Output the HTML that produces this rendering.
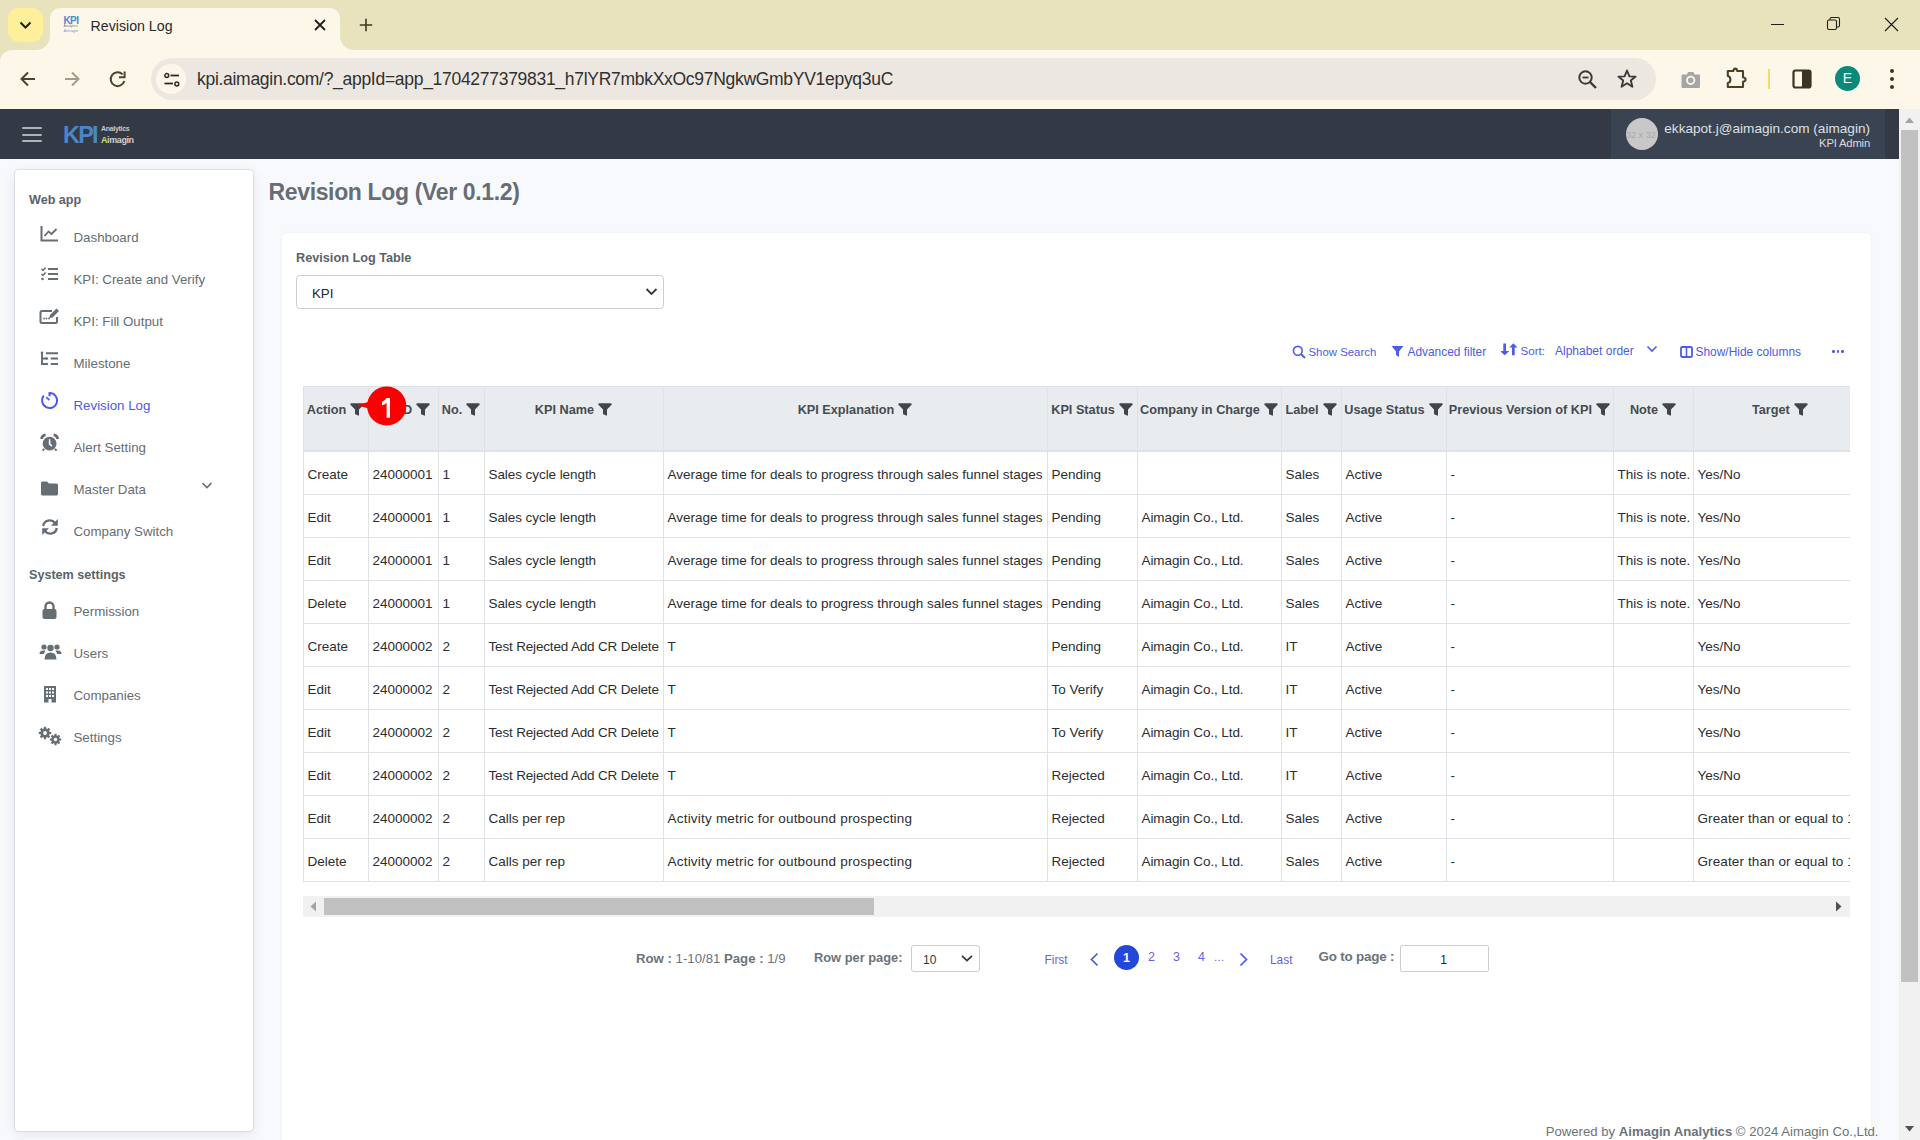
<!DOCTYPE html>
<html><head><meta charset="utf-8"><title>Revision Log</title>
<style>
*{box-sizing:border-box;margin:0;padding:0}
html,body{width:1920px;height:1140px;overflow:hidden;background:#f8f9fd;font-family:"Liberation Sans",sans-serif}
.a{position:absolute}
.nw{white-space:nowrap}
.t{line-height:1}
</style></head><body>
<div class="a" style="left:0px;top:0px;width:1920px;height:50px;background:#e9e3bd;"></div>
<div class="a" style="left:0px;top:50px;width:1920px;height:59px;background:#fdf7ea;"></div>
<div class="a" style="left:50px;top:8px;width:290px;height:50px;background:#fdf7ea;border-radius:10px 10px 0 0"></div>
<div class="a" style="left:36px;top:36px;width:14px;height:14px;background:#fdf7ea;"></div>
<div class="a" style="left:22px;top:22px;width:28px;height:28px;background:#e9e3bd;border-radius:0 0 14px 0"></div>
<div class="a" style="left:340px;top:36px;width:14px;height:14px;background:#fdf7ea;"></div>
<div class="a" style="left:340px;top:22px;width:28px;height:28px;background:#e9e3bd;border-radius:0 0 0 14px"></div>
<div class="a" style="left:0px;top:50px;width:12px;height:12px;background:#e9e3bd;"></div>
<div class="a" style="left:0px;top:50px;width:24px;height:24px;background:#fdf7ea;border-radius:12px 0 0 0"></div>
<div class="a" style="left:8px;top:8px;width:35px;height:34px;background:#fef09a;border-radius:11px"></div>
<svg class="a" style="left:17px;top:17px;" width="17" height="17" viewBox="0 0 17 17"><path d="M3.5 5.5 L8.5 10.5 L13.5 5.5" fill="none" stroke="#1f1f1f" stroke-width="2"/></svg>
<div class="a nw t" style="top:15.54px;font-size:10px;color:#4a8ad0;font-weight:bold;left:63.5px;letter-spacing:-0.6px">KPI</div>
<div class="a nw t" style="top:24.95px;font-size:3.6px;color:#777;left:63.5px;">Analytics</div>
<div class="a nw t" style="top:28.61px;font-size:4px;color:#6aa0e0;left:63.5px;">Aimagin</div>
<div class="a nw t" style="top:18.68px;font-size:14.2px;color:#2a2a2a;left:90.5px;">Revision Log</div>
<svg class="a" style="left:313px;top:18px;" width="14" height="14" viewBox="0 0 14 14"><path d="M2 2 L12 12 M12 2 L2 12" stroke="#1f1f1f" stroke-width="1.8"/></svg>
<svg class="a" style="left:358px;top:17px;" width="16" height="16" viewBox="0 0 16 16"><path d="M8 1.8 V14.2 M1.8 8 H14.2" stroke="#3d3820" stroke-width="1.6"/></svg>
<div class="a" style="left:1771px;top:24px;width:13px;height:1px;background:#1f1f1f;"></div>
<svg class="a" style="left:1826px;top:16px;" width="15" height="15" viewBox="0 0 15 15"><rect x="1.5" y="4" width="9" height="9.5" rx="1.5" fill="none" stroke="#1f1f1f" stroke-width="1.1"/><path d="M4 4 V3 Q4 1.5 5.5 1.5 H12 Q13.5 1.5 13.5 3 V9.5 Q13.5 11 12 11 H10.5" fill="none" stroke="#1f1f1f" stroke-width="1.1"/></svg>
<svg class="a" style="left:1884px;top:17px;" width="15" height="15" viewBox="0 0 15 15"><path d="M1 1 L14 14 M14 1 L1 14" stroke="#1f1f1f" stroke-width="1.2"/></svg>
<svg class="a" style="left:18px;top:69px;" width="20" height="20" viewBox="0 0 20 20"><path d="M17 10 H4 M10 3.5 L3.5 10 L10 16.5" fill="none" stroke="#4a4530" stroke-width="2"/></svg>
<svg class="a" style="left:62px;top:69px;" width="20" height="20" viewBox="0 0 20 20"><path d="M3 10 H16 M10 3.5 L16.5 10 L10 16.5" fill="none" stroke="#a19d8c" stroke-width="2"/></svg>
<svg class="a" style="left:107px;top:69px;" width="20" height="20" viewBox="0 0 20 20"><path d="M15.6 5.4 A6.9 6.9 0 1 0 17.3 12" fill="none" stroke="#4a4530" stroke-width="2"/><path d="M17.6 2.4 V8.3 H11.9" fill="none" stroke="#4a4530" stroke-width="2"/></svg>
<div class="a" style="left:151px;top:58px;width:1505px;height:42px;background:#ece8e1;border-radius:21px"></div>
<div class="a" style="left:156px;top:64px;width:30px;height:30px;border-radius:50%;background:#fdf7ea"></div>
<svg class="a" style="left:163px;top:70.5px;" width="18" height="18" viewBox="0 0 18 18"><circle cx="3.8" cy="4.5" r="1.9" fill="none" stroke="#2d2d2d" stroke-width="1.5"/><path d="M7.5 4.5 H16" stroke="#2d2d2d" stroke-width="1.8"/><circle cx="13.8" cy="13" r="1.9" fill="none" stroke="#2d2d2d" stroke-width="1.5"/><path d="M1.5 12.5 H10" stroke="#2d2d2d" stroke-width="1.8"/></svg>
<div class="a nw t" style="top:70.99px;font-size:17.5px;color:#303030;left:197px;letter-spacing:-0.29px">kpi.aimagin.com/?_appId=app_1704277379831_h7lYR7mbkXxOc97NgkwGmbYV1epyq3uC</div>
<svg class="a" style="left:1577px;top:69px;" width="22" height="22" viewBox="0 0 22 22"><circle cx="8.5" cy="8.5" r="6.2" fill="none" stroke="#3a3a3a" stroke-width="2"/><path d="M5.5 8.5 H11.5" stroke="#3a3a3a" stroke-width="1.8"/><path d="M13 13 L19 19" stroke="#3a3a3a" stroke-width="2.4"/></svg>
<svg class="a" style="left:1616px;top:68px;" width="22" height="22" viewBox="0 0 22 22"><path d="M11 2.5 L13.4 8.4 L19.6 8.6 L14.8 12.6 L16.4 18.8 L11 15.3 L5.6 18.8 L7.2 12.6 L2.4 8.6 L8.6 8.4 Z" fill="none" stroke="#3a3a3a" stroke-width="1.9" stroke-linejoin="round"/></svg>
<svg class="a" style="left:1680px;top:70px;" width="22" height="20" viewBox="0 0 22 20"><path d="M2.5 4.5 H7 L8 2 H13.5 L14.5 4.5 H19 Q20 4.5 20 5.5 V17 Q20 18 19 18 H2.5 Q1.5 18 1.5 17 V5.5 Q1.5 4.5 2.5 4.5Z" fill="#a6a6a6"/><circle cx="10.7" cy="10.3" r="4.6" fill="#fdf7ea"/><circle cx="10.7" cy="10.3" r="2.8" fill="#a6a6a6"/></svg>
<svg class="a" style="left:1724px;top:66px;" width="26" height="26" viewBox="0 0 26 26"><path d="M3.8 5 H9.3 Q9.8 2.6 11.3 2.6 Q12.8 2.6 13.3 5 H19 V11.3 Q21.6 11.8 21.6 13.5 Q21.6 15.2 19 15.7 V21 H3.8 V17 Q6.4 16.6 6.4 13.5 Q6.4 10.4 3.8 10 Z" fill="none" stroke="#4a4328" stroke-width="2.1" stroke-linejoin="round"/></svg>
<div class="a" style="left:1768px;top:69px;width:2px;height:20px;background:#f0dc6e;"></div>
<svg class="a" style="left:1792px;top:69px;" width="20" height="20" viewBox="0 0 20 20"><rect x="1.5" y="1.5" width="17" height="17" rx="2" fill="none" stroke="#3a3520" stroke-width="2.2"/><rect x="10" y="1.5" width="8.5" height="17" fill="#3a3520"/></svg>
<div class="a" style="left:1835px;top:66px;width:25px;height:25px;border-radius:50%;background:#0b8a78;color:#fff;font-size:14px;text-align:center;line-height:25px">E</div>
<div class="a" style="left:1890px;top:69px;width:4px;height:4px;border-radius:50%;background:#3a3520;box-shadow:0 8px 0 #3a3520,0 16px 0 #3a3520"></div>
<div class="a" style="left:0px;top:109px;width:1899px;height:50px;background:#333a46;"></div>
<div class="a" style="left:1611px;top:109px;width:274px;height:50px;background:#3a4352;"></div>
<div class="a" style="left:22px;top:127px;width:20px;height:2px;background:#aeb2b9;border-radius:1px"></div>
<div class="a" style="left:22px;top:133.5px;width:20px;height:2px;background:#aeb2b9;border-radius:1px"></div>
<div class="a" style="left:22px;top:140px;width:20px;height:2px;background:#aeb2b9;border-radius:1px"></div>
<div class="a nw t" style="top:123.61px;font-size:23.5px;color:#4a86c8;font-weight:bold;left:63px;letter-spacing:-1.8px">KPI</div>
<div class="a nw t" style="top:125.07px;font-size:7px;color:#c8c8c8;font-weight:bold;left:101px;letter-spacing:-0.3px">Analytics</div>
<div class="a nw t" style="top:136.38px;font-size:9px;color:#d0d0d0;font-weight:bold;left:101px;letter-spacing:-0.4px"><span style="color:#c6e06a">A</span>imagin</div>
<div class="a" style="left:1626px;top:118px;width:32px;height:32px;border-radius:50%;background:#c8c8c8"></div>
<div class="a nw t" style="top:130.63px;font-size:9.3px;color:#a9a9a9;left:1626px;letter-spacing:-0.1px">32 x 32</div>
<div class="a nw t" style="top:122.19px;font-size:13.6px;color:#dde0e4;right:50px;">ekkapot.j@aimagin.com (aimagin)</div>
<div class="a nw t" style="top:137.93px;font-size:11.3px;color:#d8dbe0;right:50px;letter-spacing:-0.2px">KPI Admin</div>
<div class="a" style="left:1899px;top:109px;width:21px;height:1031px;background:#f1f1f1;"></div>
<svg class="a" style="left:1904px;top:116px;" width="11" height="8" viewBox="0 0 11 8"><path d="M1 7 L5.5 1.5 L10 7 Z" fill="#a3a3a3"/></svg>
<div class="a" style="left:1901px;top:130px;width:17px;height:852px;background:#c1c1c1;"></div>
<svg class="a" style="left:1904px;top:1125px;" width="11" height="8" viewBox="0 0 11 8"><path d="M1 1 L5.5 6.5 L10 1 Z" fill="#505050"/></svg>
<div class="a" style="left:15px;top:169.5px;width:238px;height:961px;background:#fff;border-radius:4px;box-shadow:0 0 0 0.8px rgba(190,196,208,.55),0 3px 12px rgba(40,50,90,.10)"></div>
<div class="a nw t" style="top:194.23px;font-size:12.6px;color:#5b636b;font-weight:bold;left:29px;">Web app</div>
<div class="a nw t" style="top:230.74px;font-size:13.3px;color:#656d75;left:73.5px;">Dashboard</div>
<div class="a nw t" style="top:272.74px;font-size:13.3px;color:#656d75;left:73.5px;">KPI: Create and Verify</div>
<div class="a nw t" style="top:314.74px;font-size:13.3px;color:#656d75;left:73.5px;">KPI: Fill Output</div>
<div class="a nw t" style="top:356.74px;font-size:13.3px;color:#656d75;left:73.5px;">Milestone</div>
<div class="a nw t" style="top:398.74px;font-size:13.3px;color:#4b5ae4;left:73.5px;">Revision Log</div>
<div class="a nw t" style="top:440.74px;font-size:13.3px;color:#656d75;left:73.5px;">Alert Setting</div>
<div class="a nw t" style="top:482.74px;font-size:13.3px;color:#656d75;left:73.5px;">Master Data</div>
<div class="a nw t" style="top:524.74px;font-size:13.3px;color:#656d75;left:73.5px;">Company Switch</div>
<div class="a nw t" style="top:568.83px;font-size:12.6px;color:#5b636b;font-weight:bold;left:29px;">System settings</div>
<div class="a nw t" style="top:604.64px;font-size:13.3px;color:#656d75;left:73.5px;">Permission</div>
<div class="a nw t" style="top:646.94px;font-size:13.3px;color:#656d75;left:73.5px;">Users</div>
<div class="a nw t" style="top:688.94px;font-size:13.3px;color:#656d75;left:73.5px;">Companies</div>
<div class="a nw t" style="top:730.84px;font-size:13.3px;color:#656d75;left:73.5px;">Settings</div>
<svg class="a" style="left:40px;top:225px;" width="20" height="18" viewBox="0 0 20 18"><path d="M1.5 1 V15.5 H18" fill="none" stroke="#656d75" stroke-width="2"/><path d="M4.5 11 L8.5 6.5 L11.5 9 L16.5 4" fill="none" stroke="#656d75" stroke-width="1.8" stroke-linejoin="round"/></svg>
<svg class="a" style="left:40px;top:266px;" width="20" height="16" viewBox="0 0 20 16"><path d="M1.5 3 L3 4.5 L5.5 1.5 M1.5 8 L3 9.5 L5.5 6.5" fill="none" stroke="#656d75" stroke-width="1.5"/><circle cx="2.5" cy="13" r="1.3" fill="#656d75"/><path d="M8 3 H18 M8 8 H18 M8 13 H18" stroke="#656d75" stroke-width="2"/></svg>
<svg class="a" style="left:39px;top:307px;" width="21" height="18" viewBox="0 0 21 18"><path d="M13 4 H3 Q1.5 4 1.5 5.5 V14.5 Q1.5 16 3 16 H16.5 Q18 16 18 14.5 V10" fill="none" stroke="#656d75" stroke-width="2"/><path d="M10 11 L11 8 L17.5 1.5 L20 4 L13.5 10.5 Z" fill="#656d75"/><circle cx="5" cy="11.5" r="0.9" fill="#656d75"/><circle cx="7.5" cy="11.5" r="0.9" fill="#656d75"/><circle cx="10" cy="11.5" r="0.9" fill="#656d75"/></svg>
<svg class="a" style="left:40px;top:350px;" width="20" height="17" viewBox="0 0 20 17"><path d="M2 2.6 V14 H7 M2 8.5 H7" fill="none" stroke="#656d75" stroke-width="1.9"/><circle cx="2" cy="2.8" r="1.3" fill="#656d75"/><circle cx="6.8" cy="8.5" r="1.3" fill="#656d75"/><circle cx="6.8" cy="14" r="1.3" fill="#656d75"/><path d="M6 3.2 H18 M10.8 8.5 H18 M10.8 14 H18" stroke="#656d75" stroke-width="1.9"/></svg>
<svg class="a" style="left:40px;top:391px;" width="20" height="20" viewBox="0 0 20 20"><path d="M9.6 2 A7.5 7.5 0 1 1 3.85 4.68" fill="none" stroke="#4b5ae4" stroke-width="1.9"/><path d="M9.6 1.1 V5.2" stroke="#4b5ae4" stroke-width="2.2"/><path d="M6.3 6.2 L9.4 9.2" stroke="#4b5ae4" stroke-width="1.7"/></svg>
<svg class="a" style="left:40px;top:433px;" width="20" height="20" viewBox="0 0 20 20"><circle cx="9.6" cy="10.7" r="6.9" fill="#656d75"/><path d="M1.6 6 Q1.8 2.2 5.6 1.8 M17.6 6 Q17.4 2.2 13.6 1.8" fill="none" stroke="#656d75" stroke-width="2.8"/><path d="M4.2 15.8 L2.6 17.6 M15 15.8 L16.6 17.6" stroke="#656d75" stroke-width="1.9"/><path d="M9.6 6.3 V11 L11.9 13.2" fill="none" stroke="#fff" stroke-width="1.6"/></svg>
<svg class="a" style="left:40px;top:480px;" width="19" height="16" viewBox="0 0 19 16"><path d="M1 3 Q1 1.5 2.5 1.5 H7 L9 3.5 H16.5 Q18 3.5 18 5 V14 Q18 15.5 16.5 15.5 H2.5 Q1 15.5 1 14 Z" fill="#656d75"/></svg>
<svg class="a" style="left:201px;top:481px;" width="12" height="9" viewBox="0 0 12 9"><path d="M1.5 2 L6 6.5 L10.5 2" fill="none" stroke="#656d75" stroke-width="1.6"/></svg>
<svg class="a" style="left:41px;top:518px;" width="18" height="18" viewBox="0 0 18 18"><path d="M2.2 8 A6.6 6.6 0 0 1 14 5" fill="none" stroke="#656d75" stroke-width="2.3"/><path d="M15.8 10 A6.6 6.6 0 0 1 4 13" fill="none" stroke="#656d75" stroke-width="2.3"/><path d="M16.8 1 V7.8 H10 Z M1.2 17 V10.2 H8 Z" fill="#656d75"/></svg>
<svg class="a" style="left:41px;top:601px;" width="17" height="18" viewBox="0 0 17 18"><path d="M4.5 8 V5.5 A4 4 0 0 1 12.5 5.5 V8" fill="none" stroke="#656d75" stroke-width="2.4"/><rect x="1.5" y="8" width="14" height="10" rx="2" fill="#656d75"/></svg>
<svg class="a" style="left:39px;top:643px;" width="23" height="17" viewBox="0 0 23 17"><circle cx="5" cy="4" r="2.6" fill="#656d75"/><circle cx="18" cy="4" r="2.6" fill="#656d75"/><circle cx="11.5" cy="5" r="3.2" fill="#656d75"/><path d="M0.5 11 Q0.5 7.5 4 7.5 H6.5 Q5 9.5 5 11 Z M22.5 11 Q22.5 7.5 19 7.5 H16.5 Q18 9.5 18 11 Z" fill="#656d75"/><path d="M5.5 16.5 Q5.5 9.5 11.5 9.5 Q17.5 9.5 17.5 16.5 Z" fill="#656d75"/></svg>
<svg class="a" style="left:43px;top:685px;" width="14" height="18" viewBox="0 0 14 18"><path d="M1 1 H13 V17.5 H8.5 V14 H5.5 V17.5 H1 Z" fill="#656d75"/><g fill="#fff"><rect x="3" y="3" width="2" height="2"/><rect x="6" y="3" width="2" height="2"/><rect x="9" y="3" width="2" height="2"/><rect x="3" y="6.5" width="2" height="2"/><rect x="6" y="6.5" width="2" height="2"/><rect x="9" y="6.5" width="2" height="2"/><rect x="3" y="10" width="2" height="2"/><rect x="6" y="10" width="2" height="2"/><rect x="9" y="10" width="2" height="2"/></g></svg>
<svg class="a" style="left:38px;top:726px;" width="25" height="21" viewBox="0 0 25 21"><path d="M11.43 5.77 L13.21 5.92 L13.21 8.08 L11.43 8.23 L11.00 9.27 L12.15 10.62 L10.62 12.15 L9.27 11.00 L8.23 11.43 L8.08 13.21 L5.92 13.21 L5.77 11.43 L4.73 11.00 L3.38 12.15 L1.85 10.62 L3.00 9.27 L2.57 8.23 L0.79 8.08 L0.79 5.92 L2.57 5.77 L3.00 4.73 L1.85 3.38 L3.38 1.85 L4.73 3.00 L5.77 2.57 L5.92 0.79 L8.08 0.79 L8.23 2.57 L9.27 3.00 L10.62 1.85 L12.15 3.38 L11.00 4.73 Z" fill="#656d75"/><circle cx="7" cy="7" r="1.90" fill="#fff"/><path d="M21.55 12.38 L23.21 12.50 L23.21 14.50 L21.55 14.62 L21.15 15.57 L22.25 16.84 L20.84 18.25 L19.57 17.15 L18.62 17.55 L18.50 19.21 L16.50 19.21 L16.38 17.55 L15.43 17.15 L14.16 18.25 L12.75 16.84 L13.85 15.57 L13.45 14.62 L11.79 14.50 L11.79 12.50 L13.45 12.38 L13.85 11.43 L12.75 10.16 L14.16 8.75 L15.43 9.85 L16.38 9.45 L16.50 7.79 L18.50 7.79 L18.62 9.45 L19.57 9.85 L20.84 8.75 L22.25 10.16 L21.15 11.43 Z" fill="#656d75"/><circle cx="17.5" cy="13.5" r="1.70" fill="#fff"/></svg>
<div class="a nw t" style="top:181.03px;font-size:23px;color:#666d75;font-weight:bold;left:268.5px;letter-spacing:-0.35px">Revision Log (Ver 0.1.2)</div>
<div class="a" style="left:282px;top:233px;width:1589px;height:920px;background:#fff;border-radius:5px;box-shadow:0 0 3px rgba(30,40,80,.06)"></div>
<div class="a nw t" style="top:252.25px;font-size:12.7px;color:#5b636b;font-weight:bold;left:296px;">Revision Log Table</div>
<div class="a" style="left:296px;top:275px;width:368px;height:34px;background:#fff;border:1px solid #c9cfd5;border-radius:4px"></div>
<div class="a nw t" style="top:286.74px;font-size:13.3px;color:#212529;left:312px;">KPI</div>
<svg class="a" style="left:645px;top:287px;" width="13" height="10" viewBox="0 0 13 10"><path d="M1.5 2 L6.5 7 L11.5 2" fill="none" stroke="#343a40" stroke-width="1.8"/></svg>
<svg class="a" style="left:1292px;top:345px;" width="14" height="14" viewBox="0 0 14 14"><circle cx="5.8" cy="5.8" r="4.4" fill="none" stroke="#4d5be6" stroke-width="1.6"/><path d="M9 9 L13 13" stroke="#4d5be6" stroke-width="1.8"/></svg>
<div class="a nw t" style="top:347.35px;font-size:11.4px;color:#4d5be6;left:1308.5px;">Show Search</div>
<svg class="a" style="left:1391px;top:345px;" width="13" height="13" viewBox="0 0 13 13"><path d="M0.5 1 H12.5 L8 6.5 V12 L5 10 V6.5 Z" fill="#4d5be6"/></svg>
<div class="a nw t" style="top:346.93px;font-size:11.9px;color:#4d5be6;left:1407.5px;">Advanced filter</div>
<svg class="a" style="left:1501px;top:342px;" width="17" height="15" viewBox="0 0 17 15"><path d="M2.3 1.5 H5 V9 H8.4 L3.65 13.3 L0.9 10.8 L-1 9 H2.3 Z" fill="#4d5be6"/><path d="M11 13.2 H13.7 V5.5 H16.5 L12.35 1.3 L8.2 5.5 H11 Z" fill="#4d5be6"/></svg>
<div class="a nw t" style="top:344.68px;font-size:11.6px;color:#4d5be6;left:1520.5px;">Sort:</div>
<div class="a nw t" style="top:345.34px;font-size:12px;color:#4d5be6;left:1555px;">Alphabet order</div>
<svg class="a" style="left:1646px;top:345px;" width="12" height="8" viewBox="0 0 12 8"><path d="M1.5 1.5 L6 6 L10.5 1.5" fill="none" stroke="#4d5be6" stroke-width="1.6"/></svg>
<svg class="a" style="left:1680px;top:346px;" width="13" height="12" viewBox="0 0 13 12"><rect x="1" y="1" width="11" height="10" rx="1.2" fill="none" stroke="#4d5be6" stroke-width="1.8"/><path d="M6.5 1 V11" stroke="#4d5be6" stroke-width="1.6"/></svg>
<div class="a nw t" style="top:346.88px;font-size:11.95px;color:#4d5be6;left:1695.5px;">Show/Hide columns</div>
<div class="a" style="left:1832px;top:350px;width:2.6px;height:2.6px;border-radius:50%;background:#4d5be6"></div>
<div class="a" style="left:1836.5px;top:350px;width:2.6px;height:2.6px;border-radius:50%;background:#4d5be6"></div>
<div class="a" style="left:1841px;top:350px;width:2.6px;height:2.6px;border-radius:50%;background:#4d5be6"></div>
<div class="a" style="left:303px;top:386px;width:1547px;height:65px;background:#e9ecef;"></div>
<div class="a nw t" style="top:403.85px;font-size:12.7px;color:#454b52;font-weight:bold;left:306.75px;">Action</div>
<svg class="a" style="left:350.25px;top:402.5px;" width="14" height="13" viewBox="0 0 14 13"><path d="M0.3 1.2 Q0.3 0.3 1.3 0.3 H12.7 Q13.7 0.3 13.7 1.2 Q13.7 1.6 13.3 2 L9 6.5 V12 Q9 12.8 8.2 12.6 L5.8 11.6 Q5 11.3 5 10.5 V6.5 L0.7 2 Q0.3 1.6 0.3 1.2 Z" fill="#3f454b"/></svg>
<div class="a nw t" style="top:403.85px;font-size:12.7px;color:#454b52;font-weight:bold;left:399.5px;">ID</div>
<svg class="a" style="left:416.2px;top:402.5px;" width="14" height="13" viewBox="0 0 14 13"><path d="M0.3 1.2 Q0.3 0.3 1.3 0.3 H12.7 Q13.7 0.3 13.7 1.2 Q13.7 1.6 13.3 2 L9 6.5 V12 Q9 12.8 8.2 12.6 L5.8 11.6 Q5 11.3 5 10.5 V6.5 L0.7 2 Q0.3 1.6 0.3 1.2 Z" fill="#3f454b"/></svg>
<div class="a nw t" style="top:403.85px;font-size:12.7px;color:#454b52;font-weight:bold;left:441.77px;">No.</div>
<svg class="a" style="left:466.23px;top:402.5px;" width="14" height="13" viewBox="0 0 14 13"><path d="M0.3 1.2 Q0.3 0.3 1.3 0.3 H12.7 Q13.7 0.3 13.7 1.2 Q13.7 1.6 13.3 2 L9 6.5 V12 Q9 12.8 8.2 12.6 L5.8 11.6 Q5 11.3 5 10.5 V6.5 L0.7 2 Q0.3 1.6 0.3 1.2 Z" fill="#3f454b"/></svg>
<div class="a nw t" style="top:403.85px;font-size:12.7px;color:#454b52;font-weight:bold;left:534.86px;">KPI Name</div>
<svg class="a" style="left:598.14px;top:402.5px;" width="14" height="13" viewBox="0 0 14 13"><path d="M0.3 1.2 Q0.3 0.3 1.3 0.3 H12.7 Q13.7 0.3 13.7 1.2 Q13.7 1.6 13.3 2 L9 6.5 V12 Q9 12.8 8.2 12.6 L5.8 11.6 Q5 11.3 5 10.5 V6.5 L0.7 2 Q0.3 1.6 0.3 1.2 Z" fill="#3f454b"/></svg>
<div class="a nw t" style="top:403.85px;font-size:12.7px;color:#454b52;font-weight:bold;left:797.66px;">KPI Explanation</div>
<svg class="a" style="left:898.34px;top:402.5px;" width="14" height="13" viewBox="0 0 14 13"><path d="M0.3 1.2 Q0.3 0.3 1.3 0.3 H12.7 Q13.7 0.3 13.7 1.2 Q13.7 1.6 13.3 2 L9 6.5 V12 Q9 12.8 8.2 12.6 L5.8 11.6 Q5 11.3 5 10.5 V6.5 L0.7 2 Q0.3 1.6 0.3 1.2 Z" fill="#3f454b"/></svg>
<div class="a nw t" style="top:403.85px;font-size:12.7px;color:#454b52;font-weight:bold;left:1051.24px;">KPI Status</div>
<svg class="a" style="left:1118.76px;top:402.5px;" width="14" height="13" viewBox="0 0 14 13"><path d="M0.3 1.2 Q0.3 0.3 1.3 0.3 H12.7 Q13.7 0.3 13.7 1.2 Q13.7 1.6 13.3 2 L9 6.5 V12 Q9 12.8 8.2 12.6 L5.8 11.6 Q5 11.3 5 10.5 V6.5 L0.7 2 Q0.3 1.6 0.3 1.2 Z" fill="#3f454b"/></svg>
<div class="a nw t" style="top:403.85px;font-size:12.7px;color:#454b52;font-weight:bold;left:1140.02px;">Company in Charge</div>
<svg class="a" style="left:1263.98px;top:402.5px;" width="14" height="13" viewBox="0 0 14 13"><path d="M0.3 1.2 Q0.3 0.3 1.3 0.3 H12.7 Q13.7 0.3 13.7 1.2 Q13.7 1.6 13.3 2 L9 6.5 V12 Q9 12.8 8.2 12.6 L5.8 11.6 Q5 11.3 5 10.5 V6.5 L0.7 2 Q0.3 1.6 0.3 1.2 Z" fill="#3f454b"/></svg>
<div class="a nw t" style="top:403.85px;font-size:12.7px;color:#454b52;font-weight:bold;left:1285.41px;">Label</div>
<svg class="a" style="left:1322.59px;top:402.5px;" width="14" height="13" viewBox="0 0 14 13"><path d="M0.3 1.2 Q0.3 0.3 1.3 0.3 H12.7 Q13.7 0.3 13.7 1.2 Q13.7 1.6 13.3 2 L9 6.5 V12 Q9 12.8 8.2 12.6 L5.8 11.6 Q5 11.3 5 10.5 V6.5 L0.7 2 Q0.3 1.6 0.3 1.2 Z" fill="#3f454b"/></svg>
<div class="a nw t" style="top:403.85px;font-size:12.7px;color:#454b52;font-weight:bold;left:1344.27px;">Usage Status</div>
<svg class="a" style="left:1428.73px;top:402.5px;" width="14" height="13" viewBox="0 0 14 13"><path d="M0.3 1.2 Q0.3 0.3 1.3 0.3 H12.7 Q13.7 0.3 13.7 1.2 Q13.7 1.6 13.3 2 L9 6.5 V12 Q9 12.8 8.2 12.6 L5.8 11.6 Q5 11.3 5 10.5 V6.5 L0.7 2 Q0.3 1.6 0.3 1.2 Z" fill="#3f454b"/></svg>
<div class="a nw t" style="top:403.85px;font-size:12.7px;color:#454b52;font-weight:bold;left:1448.86px;">Previous Version of KPI</div>
<svg class="a" style="left:1596.14px;top:402.5px;" width="14" height="13" viewBox="0 0 14 13"><path d="M0.3 1.2 Q0.3 0.3 1.3 0.3 H12.7 Q13.7 0.3 13.7 1.2 Q13.7 1.6 13.3 2 L9 6.5 V12 Q9 12.8 8.2 12.6 L5.8 11.6 Q5 11.3 5 10.5 V6.5 L0.7 2 Q0.3 1.6 0.3 1.2 Z" fill="#3f454b"/></svg>
<div class="a nw t" style="top:403.85px;font-size:12.7px;color:#454b52;font-weight:bold;left:1629.89px;">Note</div>
<svg class="a" style="left:1662.11px;top:402.5px;" width="14" height="13" viewBox="0 0 14 13"><path d="M0.3 1.2 Q0.3 0.3 1.3 0.3 H12.7 Q13.7 0.3 13.7 1.2 Q13.7 1.6 13.3 2 L9 6.5 V12 Q9 12.8 8.2 12.6 L5.8 11.6 Q5 11.3 5 10.5 V6.5 L0.7 2 Q0.3 1.6 0.3 1.2 Z" fill="#3f454b"/></svg>
<div class="a nw t" style="top:403.85px;font-size:12.7px;color:#454b52;font-weight:bold;left:1752px;">Target</div>
<svg class="a" style="left:1793.87px;top:402.5px;" width="14" height="13" viewBox="0 0 14 13"><path d="M0.3 1.2 Q0.3 0.3 1.3 0.3 H12.7 Q13.7 0.3 13.7 1.2 Q13.7 1.6 13.3 2 L9 6.5 V12 Q9 12.8 8.2 12.6 L5.8 11.6 Q5 11.3 5 10.5 V6.5 L0.7 2 Q0.3 1.6 0.3 1.2 Z" fill="#3f454b"/></svg>
<div class="a" style="left:303px;top:451px;width:1547px;height:431px;overflow:hidden">
<div class="a nw t" style="top:16.57px;font-size:13.5px;color:#2a2e33;left:4.5px;">Create</div>
<div class="a nw t" style="top:16.57px;font-size:13.5px;color:#2a2e33;left:69.5px;">24000001</div>
<div class="a nw t" style="top:16.57px;font-size:13.5px;color:#2a2e33;left:139.5px;">1</div>
<div class="a nw t" style="top:16.57px;font-size:13.5px;color:#2a2e33;left:185.5px;letter-spacing:-0.07px">Sales cycle length</div>
<div class="a nw t" style="top:16.57px;font-size:13.5px;color:#2a2e33;left:364.5px;">Average time for deals to progress through sales funnel stages</div>
<div class="a nw t" style="top:16.57px;font-size:13.5px;color:#2a2e33;left:748.5px;">Pending</div>
<div class="a nw t" style="top:16.57px;font-size:13.5px;color:#2a2e33;left:982.5px;">Sales</div>
<div class="a nw t" style="top:16.57px;font-size:13.5px;color:#2a2e33;left:1042.5px;">Active</div>
<div class="a nw t" style="top:16.57px;font-size:13.5px;color:#2a2e33;left:1147.5px;">-</div>
<div class="a nw t" style="top:16.57px;font-size:13.5px;color:#2a2e33;left:1314.5px;">This is note.</div>
<div class="a nw t" style="top:16.57px;font-size:13.5px;color:#2a2e33;left:1394.5px;">Yes/No</div>
<div class="a nw t" style="top:59.57px;font-size:13.5px;color:#2a2e33;left:4.5px;">Edit</div>
<div class="a nw t" style="top:59.57px;font-size:13.5px;color:#2a2e33;left:69.5px;">24000001</div>
<div class="a nw t" style="top:59.57px;font-size:13.5px;color:#2a2e33;left:139.5px;">1</div>
<div class="a nw t" style="top:59.57px;font-size:13.5px;color:#2a2e33;left:185.5px;letter-spacing:-0.07px">Sales cycle length</div>
<div class="a nw t" style="top:59.57px;font-size:13.5px;color:#2a2e33;left:364.5px;">Average time for deals to progress through sales funnel stages</div>
<div class="a nw t" style="top:59.57px;font-size:13.5px;color:#2a2e33;left:748.5px;">Pending</div>
<div class="a nw t" style="top:59.57px;font-size:13.5px;color:#2a2e33;left:838.5px;letter-spacing:-0.09px">Aimagin Co., Ltd.</div>
<div class="a nw t" style="top:59.57px;font-size:13.5px;color:#2a2e33;left:982.5px;">Sales</div>
<div class="a nw t" style="top:59.57px;font-size:13.5px;color:#2a2e33;left:1042.5px;">Active</div>
<div class="a nw t" style="top:59.57px;font-size:13.5px;color:#2a2e33;left:1147.5px;">-</div>
<div class="a nw t" style="top:59.57px;font-size:13.5px;color:#2a2e33;left:1314.5px;">This is note.</div>
<div class="a nw t" style="top:59.57px;font-size:13.5px;color:#2a2e33;left:1394.5px;">Yes/No</div>
<div class="a nw t" style="top:102.57px;font-size:13.5px;color:#2a2e33;left:4.5px;">Edit</div>
<div class="a nw t" style="top:102.57px;font-size:13.5px;color:#2a2e33;left:69.5px;">24000001</div>
<div class="a nw t" style="top:102.57px;font-size:13.5px;color:#2a2e33;left:139.5px;">1</div>
<div class="a nw t" style="top:102.57px;font-size:13.5px;color:#2a2e33;left:185.5px;letter-spacing:-0.07px">Sales cycle length</div>
<div class="a nw t" style="top:102.57px;font-size:13.5px;color:#2a2e33;left:364.5px;">Average time for deals to progress through sales funnel stages</div>
<div class="a nw t" style="top:102.57px;font-size:13.5px;color:#2a2e33;left:748.5px;">Pending</div>
<div class="a nw t" style="top:102.57px;font-size:13.5px;color:#2a2e33;left:838.5px;letter-spacing:-0.09px">Aimagin Co., Ltd.</div>
<div class="a nw t" style="top:102.57px;font-size:13.5px;color:#2a2e33;left:982.5px;">Sales</div>
<div class="a nw t" style="top:102.57px;font-size:13.5px;color:#2a2e33;left:1042.5px;">Active</div>
<div class="a nw t" style="top:102.57px;font-size:13.5px;color:#2a2e33;left:1147.5px;">-</div>
<div class="a nw t" style="top:102.57px;font-size:13.5px;color:#2a2e33;left:1314.5px;">This is note.</div>
<div class="a nw t" style="top:102.57px;font-size:13.5px;color:#2a2e33;left:1394.5px;">Yes/No</div>
<div class="a nw t" style="top:145.57px;font-size:13.5px;color:#2a2e33;left:4.5px;">Delete</div>
<div class="a nw t" style="top:145.57px;font-size:13.5px;color:#2a2e33;left:69.5px;">24000001</div>
<div class="a nw t" style="top:145.57px;font-size:13.5px;color:#2a2e33;left:139.5px;">1</div>
<div class="a nw t" style="top:145.57px;font-size:13.5px;color:#2a2e33;left:185.5px;letter-spacing:-0.07px">Sales cycle length</div>
<div class="a nw t" style="top:145.57px;font-size:13.5px;color:#2a2e33;left:364.5px;">Average time for deals to progress through sales funnel stages</div>
<div class="a nw t" style="top:145.57px;font-size:13.5px;color:#2a2e33;left:748.5px;">Pending</div>
<div class="a nw t" style="top:145.57px;font-size:13.5px;color:#2a2e33;left:838.5px;letter-spacing:-0.09px">Aimagin Co., Ltd.</div>
<div class="a nw t" style="top:145.57px;font-size:13.5px;color:#2a2e33;left:982.5px;">Sales</div>
<div class="a nw t" style="top:145.57px;font-size:13.5px;color:#2a2e33;left:1042.5px;">Active</div>
<div class="a nw t" style="top:145.57px;font-size:13.5px;color:#2a2e33;left:1147.5px;">-</div>
<div class="a nw t" style="top:145.57px;font-size:13.5px;color:#2a2e33;left:1314.5px;">This is note.</div>
<div class="a nw t" style="top:145.57px;font-size:13.5px;color:#2a2e33;left:1394.5px;">Yes/No</div>
<div class="a nw t" style="top:188.57px;font-size:13.5px;color:#2a2e33;left:4.5px;">Create</div>
<div class="a nw t" style="top:188.57px;font-size:13.5px;color:#2a2e33;left:69.5px;">24000002</div>
<div class="a nw t" style="top:188.57px;font-size:13.5px;color:#2a2e33;left:139.5px;">2</div>
<div class="a nw t" style="top:188.57px;font-size:13.5px;color:#2a2e33;left:185.5px;letter-spacing:-0.17px">Test Rejected Add CR Delete</div>
<div class="a nw t" style="top:188.57px;font-size:13.5px;color:#2a2e33;left:364.5px;">T</div>
<div class="a nw t" style="top:188.57px;font-size:13.5px;color:#2a2e33;left:748.5px;">Pending</div>
<div class="a nw t" style="top:188.57px;font-size:13.5px;color:#2a2e33;left:838.5px;letter-spacing:-0.09px">Aimagin Co., Ltd.</div>
<div class="a nw t" style="top:188.57px;font-size:13.5px;color:#2a2e33;left:982.5px;">IT</div>
<div class="a nw t" style="top:188.57px;font-size:13.5px;color:#2a2e33;left:1042.5px;">Active</div>
<div class="a nw t" style="top:188.57px;font-size:13.5px;color:#2a2e33;left:1147.5px;">-</div>
<div class="a nw t" style="top:188.57px;font-size:13.5px;color:#2a2e33;left:1394.5px;">Yes/No</div>
<div class="a nw t" style="top:231.57px;font-size:13.5px;color:#2a2e33;left:4.5px;">Edit</div>
<div class="a nw t" style="top:231.57px;font-size:13.5px;color:#2a2e33;left:69.5px;">24000002</div>
<div class="a nw t" style="top:231.57px;font-size:13.5px;color:#2a2e33;left:139.5px;">2</div>
<div class="a nw t" style="top:231.57px;font-size:13.5px;color:#2a2e33;left:185.5px;letter-spacing:-0.17px">Test Rejected Add CR Delete</div>
<div class="a nw t" style="top:231.57px;font-size:13.5px;color:#2a2e33;left:364.5px;">T</div>
<div class="a nw t" style="top:231.57px;font-size:13.5px;color:#2a2e33;left:748.5px;">To Verify</div>
<div class="a nw t" style="top:231.57px;font-size:13.5px;color:#2a2e33;left:838.5px;letter-spacing:-0.09px">Aimagin Co., Ltd.</div>
<div class="a nw t" style="top:231.57px;font-size:13.5px;color:#2a2e33;left:982.5px;">IT</div>
<div class="a nw t" style="top:231.57px;font-size:13.5px;color:#2a2e33;left:1042.5px;">Active</div>
<div class="a nw t" style="top:231.57px;font-size:13.5px;color:#2a2e33;left:1147.5px;">-</div>
<div class="a nw t" style="top:231.57px;font-size:13.5px;color:#2a2e33;left:1394.5px;">Yes/No</div>
<div class="a nw t" style="top:274.57px;font-size:13.5px;color:#2a2e33;left:4.5px;">Edit</div>
<div class="a nw t" style="top:274.57px;font-size:13.5px;color:#2a2e33;left:69.5px;">24000002</div>
<div class="a nw t" style="top:274.57px;font-size:13.5px;color:#2a2e33;left:139.5px;">2</div>
<div class="a nw t" style="top:274.57px;font-size:13.5px;color:#2a2e33;left:185.5px;letter-spacing:-0.17px">Test Rejected Add CR Delete</div>
<div class="a nw t" style="top:274.57px;font-size:13.5px;color:#2a2e33;left:364.5px;">T</div>
<div class="a nw t" style="top:274.57px;font-size:13.5px;color:#2a2e33;left:748.5px;">To Verify</div>
<div class="a nw t" style="top:274.57px;font-size:13.5px;color:#2a2e33;left:838.5px;letter-spacing:-0.09px">Aimagin Co., Ltd.</div>
<div class="a nw t" style="top:274.57px;font-size:13.5px;color:#2a2e33;left:982.5px;">IT</div>
<div class="a nw t" style="top:274.57px;font-size:13.5px;color:#2a2e33;left:1042.5px;">Active</div>
<div class="a nw t" style="top:274.57px;font-size:13.5px;color:#2a2e33;left:1147.5px;">-</div>
<div class="a nw t" style="top:274.57px;font-size:13.5px;color:#2a2e33;left:1394.5px;">Yes/No</div>
<div class="a nw t" style="top:317.57px;font-size:13.5px;color:#2a2e33;left:4.5px;">Edit</div>
<div class="a nw t" style="top:317.57px;font-size:13.5px;color:#2a2e33;left:69.5px;">24000002</div>
<div class="a nw t" style="top:317.57px;font-size:13.5px;color:#2a2e33;left:139.5px;">2</div>
<div class="a nw t" style="top:317.57px;font-size:13.5px;color:#2a2e33;left:185.5px;letter-spacing:-0.17px">Test Rejected Add CR Delete</div>
<div class="a nw t" style="top:317.57px;font-size:13.5px;color:#2a2e33;left:364.5px;">T</div>
<div class="a nw t" style="top:317.57px;font-size:13.5px;color:#2a2e33;left:748.5px;">Rejected</div>
<div class="a nw t" style="top:317.57px;font-size:13.5px;color:#2a2e33;left:838.5px;letter-spacing:-0.09px">Aimagin Co., Ltd.</div>
<div class="a nw t" style="top:317.57px;font-size:13.5px;color:#2a2e33;left:982.5px;">IT</div>
<div class="a nw t" style="top:317.57px;font-size:13.5px;color:#2a2e33;left:1042.5px;">Active</div>
<div class="a nw t" style="top:317.57px;font-size:13.5px;color:#2a2e33;left:1147.5px;">-</div>
<div class="a nw t" style="top:317.57px;font-size:13.5px;color:#2a2e33;left:1394.5px;">Yes/No</div>
<div class="a nw t" style="top:360.57px;font-size:13.5px;color:#2a2e33;left:4.5px;">Edit</div>
<div class="a nw t" style="top:360.57px;font-size:13.5px;color:#2a2e33;left:69.5px;">24000002</div>
<div class="a nw t" style="top:360.57px;font-size:13.5px;color:#2a2e33;left:139.5px;">2</div>
<div class="a nw t" style="top:360.57px;font-size:13.5px;color:#2a2e33;left:185.5px;">Calls per rep</div>
<div class="a nw t" style="top:360.57px;font-size:13.5px;color:#2a2e33;left:364.5px;letter-spacing:0.21px">Activity metric for outbound prospecting</div>
<div class="a nw t" style="top:360.57px;font-size:13.5px;color:#2a2e33;left:748.5px;">Rejected</div>
<div class="a nw t" style="top:360.57px;font-size:13.5px;color:#2a2e33;left:838.5px;letter-spacing:-0.09px">Aimagin Co., Ltd.</div>
<div class="a nw t" style="top:360.57px;font-size:13.5px;color:#2a2e33;left:982.5px;">Sales</div>
<div class="a nw t" style="top:360.57px;font-size:13.5px;color:#2a2e33;left:1042.5px;">Active</div>
<div class="a nw t" style="top:360.57px;font-size:13.5px;color:#2a2e33;left:1147.5px;">-</div>
<div class="a nw t" style="top:360.57px;font-size:13.5px;color:#2a2e33;left:1394.5px;letter-spacing:0.11px">Greater than or equal to 1</div>
<div class="a nw t" style="top:403.57px;font-size:13.5px;color:#2a2e33;left:4.5px;">Delete</div>
<div class="a nw t" style="top:403.57px;font-size:13.5px;color:#2a2e33;left:69.5px;">24000002</div>
<div class="a nw t" style="top:403.57px;font-size:13.5px;color:#2a2e33;left:139.5px;">2</div>
<div class="a nw t" style="top:403.57px;font-size:13.5px;color:#2a2e33;left:185.5px;">Calls per rep</div>
<div class="a nw t" style="top:403.57px;font-size:13.5px;color:#2a2e33;left:364.5px;letter-spacing:0.21px">Activity metric for outbound prospecting</div>
<div class="a nw t" style="top:403.57px;font-size:13.5px;color:#2a2e33;left:748.5px;">Rejected</div>
<div class="a nw t" style="top:403.57px;font-size:13.5px;color:#2a2e33;left:838.5px;letter-spacing:-0.09px">Aimagin Co., Ltd.</div>
<div class="a nw t" style="top:403.57px;font-size:13.5px;color:#2a2e33;left:982.5px;">Sales</div>
<div class="a nw t" style="top:403.57px;font-size:13.5px;color:#2a2e33;left:1042.5px;">Active</div>
<div class="a nw t" style="top:403.57px;font-size:13.5px;color:#2a2e33;left:1147.5px;">-</div>
<div class="a nw t" style="top:403.57px;font-size:13.5px;color:#2a2e33;left:1394.5px;letter-spacing:0.11px">Greater than or equal to 1</div>
</div>
<div class="a" style="left:303px;top:386px;width:1547px;height:1px;background:#dee2e6;"></div>
<div class="a" style="left:303px;top:450px;width:1547px;height:2px;background:#dee2e6;"></div>
<div class="a" style="left:303px;top:494px;width:1547px;height:1px;background:#dee2e6;"></div>
<div class="a" style="left:303px;top:537px;width:1547px;height:1px;background:#dee2e6;"></div>
<div class="a" style="left:303px;top:580px;width:1547px;height:1px;background:#dee2e6;"></div>
<div class="a" style="left:303px;top:623px;width:1547px;height:1px;background:#dee2e6;"></div>
<div class="a" style="left:303px;top:666px;width:1547px;height:1px;background:#dee2e6;"></div>
<div class="a" style="left:303px;top:709px;width:1547px;height:1px;background:#dee2e6;"></div>
<div class="a" style="left:303px;top:752px;width:1547px;height:1px;background:#dee2e6;"></div>
<div class="a" style="left:303px;top:795px;width:1547px;height:1px;background:#dee2e6;"></div>
<div class="a" style="left:303px;top:838px;width:1547px;height:1px;background:#dee2e6;"></div>
<div class="a" style="left:303px;top:881px;width:1547px;height:1px;background:#dee2e6;"></div>
<div class="a" style="left:303px;top:386px;width:1px;height:496px;background:#dee2e6;"></div>
<div class="a" style="left:368px;top:386px;width:1px;height:496px;background:#dee2e6;"></div>
<div class="a" style="left:438px;top:386px;width:1px;height:496px;background:#dee2e6;"></div>
<div class="a" style="left:484px;top:386px;width:1px;height:496px;background:#dee2e6;"></div>
<div class="a" style="left:663px;top:386px;width:1px;height:496px;background:#dee2e6;"></div>
<div class="a" style="left:1047px;top:386px;width:1px;height:496px;background:#dee2e6;"></div>
<div class="a" style="left:1137px;top:386px;width:1px;height:496px;background:#dee2e6;"></div>
<div class="a" style="left:1281px;top:386px;width:1px;height:496px;background:#dee2e6;"></div>
<div class="a" style="left:1341px;top:386px;width:1px;height:496px;background:#dee2e6;"></div>
<div class="a" style="left:1446px;top:386px;width:1px;height:496px;background:#dee2e6;"></div>
<div class="a" style="left:1613px;top:386px;width:1px;height:496px;background:#dee2e6;"></div>
<div class="a" style="left:1693px;top:386px;width:1px;height:496px;background:#dee2e6;"></div>
<svg class="a" style="left:350px;top:384px;" width="60" height="44" viewBox="0 0 60 44"><path d="M7 21.2 L19 17.8 L19.5 24.8 Z" fill="#fa0000"/><circle cx="36.7" cy="22" r="19.6" fill="#fa0000"/></svg>
<svg class="a" style="left:380px;top:396px;" width="12" height="24" viewBox="0 0 12 24"><path d="M6.6 2 H10 V21.7 H6.6 V6.9 Q4.6 8.5 2 9.3 V5.9 Q5 4.8 6.6 2 Z" fill="#fff"/></svg>
<div class="a" style="left:303px;top:896px;width:1547px;height:21px;background:#f1f1f1;"></div>
<div class="a" style="left:324px;top:898px;width:550px;height:17px;background:#c1c1c1;"></div>
<svg class="a" style="left:309px;top:901px;" width="8" height="11" viewBox="0 0 8 11"><path d="M7 0.5 L1.5 5.5 L7 10.5 Z" fill="#a3a3a3"/></svg>
<svg class="a" style="left:1835px;top:901px;" width="8" height="11" viewBox="0 0 8 11"><path d="M1 0.5 L6.5 5.5 L1 10.5 Z" fill="#505050"/></svg>
<div class="a nw t" style="top:951.83px;font-size:13.2px;color:#6b737b;left:636px;"><b>Row :</b> 1-10/81 <b>Page :</b> 1/9</div>
<div class="a nw t" style="top:951.52px;font-size:12.85px;color:#6b737b;font-weight:bold;left:814px;">Row per page:</div>
<div class="a" style="left:911px;top:945px;width:68.5px;height:27px;background:#fff;border:1px solid #c9cfd5;border-radius:3px"></div>
<div class="a nw t" style="top:953.64px;font-size:12px;color:#33383d;left:923px;">10</div>
<svg class="a" style="left:960px;top:954px;" width="14" height="9" viewBox="0 0 14 9"><path d="M2 1.8 L7 6.5 L12 1.8" fill="none" stroke="#333" stroke-width="1.7"/></svg>
<div class="a nw t" style="top:954.53px;font-size:11.9px;color:#6a61e0;left:1044.5px;">First</div>
<svg class="a" style="left:1089px;top:952px;" width="11" height="15" viewBox="0 0 11 15"><path d="M8.5 1.5 L2.5 7.5 L8.5 13.5" fill="none" stroke="#4b5ae4" stroke-width="1.7"/></svg>
<div class="a" style="left:1114px;top:945px;width:25px;height:25px;border-radius:50%;background:#2347d8"></div>
<div class="a nw t" style="top:951.92px;font-size:12.5px;color:#fff;font-weight:bold;left:1126.5px;transform:translateX(-50%);">1</div>
<div class="a nw t" style="top:951.42px;font-size:12.5px;color:#6a61e0;left:1151.5px;transform:translateX(-50%);">2</div>
<div class="a nw t" style="top:951.42px;font-size:12.5px;color:#6a61e0;left:1176.5px;transform:translateX(-50%);">3</div>
<div class="a nw t" style="top:951.42px;font-size:12.5px;color:#6a61e0;left:1201.5px;transform:translateX(-50%);">4</div>
<div class="a nw t" style="top:952.27px;font-size:11.5px;color:#6a61e0;left:1214px;letter-spacing:0.3px">...</div>
<svg class="a" style="left:1238px;top:952px;" width="11" height="15" viewBox="0 0 11 15"><path d="M2.5 1.5 L8.5 7.5 L2.5 13.5" fill="none" stroke="#4b5ae4" stroke-width="1.7"/></svg>
<div class="a nw t" style="top:954.53px;font-size:11.9px;color:#6a61e0;left:1270px;">Last</div>
<div class="a nw t" style="top:949.66px;font-size:13.4px;color:#6b737b;font-weight:bold;left:1318.5px;letter-spacing:-0.2px">Go to page :</div>
<div class="a" style="left:1400px;top:945px;width:89px;height:27px;background:#fff;border:1px solid #c9cfd5;border-radius:2px"></div>
<div class="a nw t" style="top:953.64px;font-size:12px;color:#212529;left:1443.5px;transform:translateX(-50%);">1</div>
<div class="a nw t" style="top:1124.87px;font-size:13.15px;color:#6b737b;right:41.5px;">Powered by <b>Aimagin Analytics</b> &copy; 2024 Aimagin Co.,Ltd.</div>
</body></html>
